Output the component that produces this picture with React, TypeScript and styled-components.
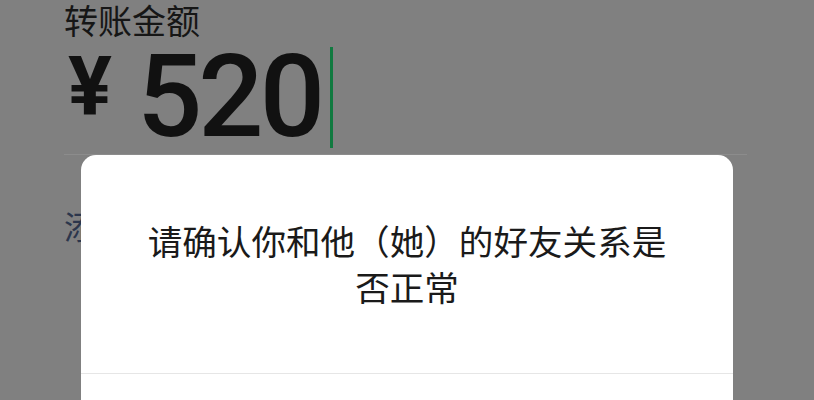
import React from 'react';
import styled, { createGlobalStyle } from 'styled-components';

const GlobalStyle = createGlobalStyle`
  html, body {
    margin: 0;
    padding: 0;
    height: 400px;
    overflow: hidden;
    background: #808080;
    font-family: 'Noto Sans CJK SC', 'Noto Sans', sans-serif;
  }
`;

const Page = styled.div`
  position: relative;
  height: 400px;
  overflow: hidden;
  background: #808080;
`;

const Content = styled.div`
  display: flex;
  flex-direction: column;
  padding: 0 67px 0 64px;
`;

const Label = styled.div`
  font-size: 34px;
  line-height: 40px;
  color: #161616;
`;

const AmountRow = styled.div`
  display: flex;
  align-items: flex-start;
  height: 114px;
`;

const Currency = styled.span`
  font-family: Roboto, 'Liberation Sans', sans-serif;
  font-weight: 700;
  font-size: 82px;
  line-height: 1;
  color: #111;
  margin: 0 25px 0 4px;
  padding-top: 5px;
`;

const Digits = styled.span`
  font-family: Roboto, 'Liberation Sans', sans-serif;
  font-weight: 500;
  font-size: 115px;
  line-height: 1;
  color: #111;
  letter-spacing: -4px;
  margin-top: -1px;
`;

const Caret = styled.span`
  width: 3px;
  height: 101px;
  background: #117a40;
  margin-left: 9px;
  margin-top: 7px;
`;

const Divider = styled.div`
  height: 1px;
  background: #8c8c8c;
`;

const Memo = styled.div`
  margin-top: 50px;
  font-size: 32px;
  line-height: 40px;
  color: #2c364c;
`;

const Dialog = styled.div`
  position: absolute;
  top: 155px;
  left: 81px;
  width: 652px;
  background: #fff;
  border-radius: 15px;
  display: flex;
  flex-direction: column;
`;

const Message = styled.div`
  padding: 62px 56px 64px;
  text-align: center;
  font-size: 34.6px;
  line-height: 46px;
  color: #1a1a1a;
`;

const Footer = styled.div`
  display: flex;
  flex-direction: column;
  border-top: 1px solid #e6e6e6;
`;

const Action = styled.button<{ $primary?: boolean }>`
  height: 112px;
  border: none;
  background: none;
  font-family: inherit;
  font-size: 34px;
  font-weight: ${p => (p.$primary ? 600 : 400)};
  color: ${p => (p.$primary ? '#576b95' : '#1a1a1a')};
  & + & {
    border-top: 1px solid #e6e6e6;
  }
`;

export default function App() {
  return (
    <>
      <GlobalStyle />
      <Page>
        <Content>
          <Label>转账金额</Label>
          <AmountRow>
            <Currency>¥</Currency>
            <Digits>520</Digits>
            <Caret />
          </AmountRow>
          <Divider />
          <Memo>添加转账说明</Memo>
        </Content>
        <Dialog>
          <Message>请确认你和他（她）的好友关系是否正常</Message>
          <Footer>
            <Action $primary>继续转账</Action>
            <Action>取消</Action>
          </Footer>
        </Dialog>
      </Page>
    </>
  );
}
